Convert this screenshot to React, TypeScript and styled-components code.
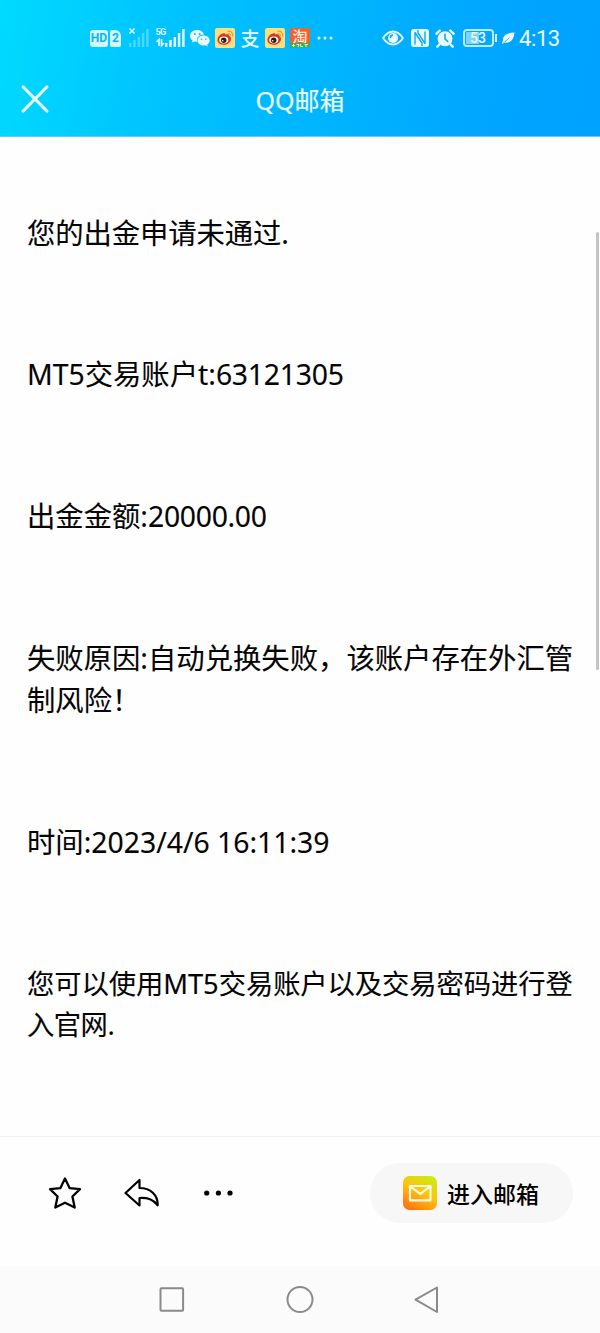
import React from "react";
import styled, { createGlobalStyle } from "styled-components";

const GlobalStyle = createGlobalStyle`
  * { box-sizing: border-box; }
  body { margin: 0; background: #fff; }
`;

const Screen = styled.div`
  width: 600px;
  height: 1333px;
  display: flex;
  flex-direction: column;
  background: #fefefe;
  color: #050505;
  font-family: "Noto Sans", "Noto Sans CJK SC", sans-serif;
  overflow: hidden;
`;

const Header = styled.header`
  height: 137px;
  flex: none;
  background: linear-gradient(100deg, #00daff 0%, #00c3ff 28%, #00b3ff 58%, #00a5ff 82%, #00a2ff 100%);
  border-bottom: 1px solid #5fccfa;
  color: #e9fbff;
`;

const StatusBar = styled.div`
  height: 62px;
  padding: 16px 0 2px 90px;
  display: flex;
  align-items: center;
`;

const StatusItem = styled.span<{ $w: number; $gap?: number }>`
  width: ${(p) => p.$w}px;
  height: 20px;
  flex: none;
  margin-left: ${(p) => p.$gap ?? 0}px;
  display: flex;
  align-items: center;
  justify-content: center;
  svg { display: block; flex: none; overflow: visible; }
`;

const Badge = styled.span<{ $w: number; $notch?: boolean }>`
  width: ${(p) => p.$w}px;
  height: 17px;
  border-radius: ${(p) => (p.$notch ? "2px 6px 2px 2px" : "3px")};
  background: #d5f6ff;
  color: #08b5f5;
  font: 700 12px/17px Roboto, sans-serif;
  text-align: center;
`;

const Network = styled.span`
  font: 700 9px/9px Roboto, sans-serif;
  letter-spacing: -0.6px;
  width: 11px;
  height: 20px;
  margin-right: -2px;
  svg { margin-top: 2px; }
`;

const Alipay = styled.span`
  height: 20px;
  font: 500 19px/19px "Noto Sans CJK SC", sans-serif;
`;

const TaoIcon = styled.span`
  width: 20px;
  height: 20px;
  border-radius: 2px;
  display: flex;
  flex-direction: column;
  background: #f0632f;
  color: #ffe9df;
`;

const TaoGlyph = styled.span`
  height: 15px;
  font: 500 15px/15px "Noto Sans CJK SC", sans-serif;
  text-align: center;
`;

const TaoCaption = styled.span`
  height: 5px;
  border-radius: 0 0 2px 2px;
  background: #3fae5b;
  display: flex;
  align-items: center;
  justify-content: center;
`;

const BatteryBody = styled.span`
  width: 31px;
  height: 18px;
  border: 2px solid #bdeaff;
  border-radius: 4px;
  background: linear-gradient(90deg, #7cd3ff 53%, transparent 53%) content-box;
  padding: 1px;
  font: 500 14px/12px Roboto, sans-serif;
  text-align: center;
`;

const BatteryTip = styled.span`
  width: 2px;
  height: 8px;
  margin-left: 1px;
  background: #d5f2ff;
`;

const Clock = styled.span`
  margin: 1px 0 0 4px;
  font: 400 22px/22px Roboto, sans-serif;
  letter-spacing: -0.4px;
  white-space: nowrap;
`;

const TitleBar = styled.div`
  height: 74px;
  display: grid;
  grid-template-columns: 70px 1fr 70px;
  align-items: center;
  svg { display: block; margin-left: 21px; }
`;

const Title = styled.h1`
  margin: 2px 0 0;
  text-align: center;
  font-size: 25px;
  line-height: 34px;
  font-weight: 400;
  -webkit-text-stroke: 0.2px currentColor;
`;

const Body = styled.main`
  height: 999px;
  flex: none;
  display: flex;
  justify-content: space-between;
`;

const Message = styled.article`
  padding: 74.500px 0 0 27px;
`;

const Paragraph = styled.p<{ $small?: boolean }>`
  margin: 0 0 99.4px;
  font-size: ${(p) => (p.$small ? 27.3 : 28.35)}px;
  line-height: ${(p) => (p.$small ? 41 : 42.4)}px;
  white-space: nowrap;
  -webkit-text-stroke: 0.1px currentColor;
`;

const Run = styled.span<{ $track: number }>`
  letter-spacing: ${(p) => p.$track}px;
`;

const ScrollThumb = styled.div`
  width: 3px;
  height: 438px;
  margin: 95px 1px 0 0;
  border-radius: 2px;
  background: #c3c3c3;
`;

const Actions = styled.footer`
  height: 130px;
  flex: none;
  border-top: 1px solid #f1f1f1;
  padding: 26px 27px 0 48px;
  display: flex;
  align-items: flex-start;
`;

const ActionGroup = styled.div`
  height: 60px;
  display: flex;
  align-items: center;
  gap: 42px;
  flex: 1;
  svg { display: block; }
`;

const MailButton = styled.button`
  width: 203px;
  height: 60px;
  border: 0;
  border-radius: 30px;
  padding: 0 0 0 33px;
  background: #f7f7f7;
  display: flex;
  align-items: center;
  gap: 10px;
  color: #000;
  white-space: nowrap;
`;

const MailLabel = styled.span`
  margin-top: -1px;
  font: 500 23px/30px "Noto Sans CJK SC", sans-serif;
`;

const NavBar = styled.nav`
  height: 67px;
  flex: none;
  background: #fbfbfb;
  display: flex;
  justify-content: center;
  align-items: center;
  gap: 99px;
  svg { display: block; }
`;

const Signal = ({ dim }: { dim?: boolean }) => (
  <svg width="20" height="18" viewBox="0 0 20 18" fill="currentColor" opacity={dim ? 0.32 : 1}>
    <rect x="0" y="14" width="2.4" height="4" />
    <rect x="4.3" y="11" width="2.4" height="7" />
    <rect x="8.6" y="8" width="2.4" height="10" />
    <rect x="12.9" y="4" width="2.4" height="14" />
    <rect x="17.2" y="0" width="2.4" height="18" />
  </svg>
);

const WeChat = () => (
  <svg width="20" height="18" viewBox="0 0 20 18" fill="currentColor">
    <path d="M7.2 1C3.2 1 0 3.6 0 6.9c0 1.9 1 3.5 2.6 4.6L2 13.6l2.5-1.2c.9.3 1.8.4 2.7.4-1.4-4 2.2-7.4 6.8-7.2C13.2 2.9 10.4 1 7.2 1Z" />
    <path d="M13.6 6.6c-3.5 0-6.1 2.3-6.1 5s2.600 5 6.100 5c.7 0 1.400-.1 2-.3l2.200 1.200-.6-1.900c1.500-.9 2.500-2.300 2.500-4 0-2.700-2.700-5-6.100-5Z" />
    <g fill="#08b9fb"><circle cx="4.8" cy="5" r="1" /><circle cx="9.6" cy="5" r="1" /><circle cx="11.5" cy="10.2" r=".8" /><circle cx="15.7" cy="10.2" r=".8" /></g>
  </svg>
);

const Weibo = () => (
  <svg width="20" height="20" viewBox="0 0 20 20">
    <rect width="20" height="20" rx="2" fill="#fbdf7d" />
    <path d="M8 5.500c1.300-.6 2.500-.4 2.300 1.100 2-.8 4.200-.6 3.700 1.300 1.400.4 2.200 1.800 2 3.300-.4 3.500-4 5.800-7.500 5.600-4-.2-6.400-2.500-6-5.500C2.700 8.700 5.100 6.200 8 5.500Z" fill="#d93324" />
    <ellipse cx="8.800" cy="12" rx="4.600" ry="3.400" fill="#fff8e8" />
    <circle cx="8.700" cy="12.200" r="2.700" fill="#252020" />
    <circle cx="7.700" cy="12.800" r=".8" fill="#fff" />
    <path d="M13 3.300c3-.5 5.300 1.800 4.700 4.900M13 5.800c1.500-.3 2.500.8 2.200 2.200" fill="none" stroke="#f19a2a" strokeWidth="1.200" strokeLinecap="round" />
  </svg>
);

const Eye = () => (
  <svg width="22" height="16" viewBox="0 0 22 16">
    <path d="M1 8Q5.500 1.500 11 1.500T21 8Q16.500 14.500 11 14.500T1 8Z" fill="none" stroke="currentColor" strokeWidth="1.800" strokeLinejoin="round" />
    <circle cx="11" cy="8" r="5" fill="currentColor" />
    <path d="M11 8V4.200A3.800 3.800 0 0 0 7.500 8Z" fill="#08a9fb" />
    <circle cx="10.800" cy="7.500" r="1.500" fill="currentColor" />
  </svg>
);

const Nfc = () => (
  <svg width="18" height="18" viewBox="0 0 18 18">
    <rect width="18" height="18" rx="3" fill="currentColor" />
    <path d="M4 15.500V3.500L11 14V17M14 2.500v12L7 4V1" fill="none" stroke="#08a9fb" strokeWidth="1.400" strokeLinejoin="round" />
  </svg>
);

const Alarm = () => (
  <svg width="20" height="19" viewBox="0 0 20 19" fill="none" stroke="currentColor" strokeLinecap="round">
    <circle cx="10" cy="9.700" r="7.500" fill="currentColor" stroke="none" />
    <path d="M1.300 4.800 4.700 1.600M18.700 4.800l-3.400-3.200M4.300 15.600l-2 2M15.700 15.600l2 2" strokeWidth="2.400" />
    <path d="M10 5.300v4.600l2.800 2.600" stroke="#08a5fb" strokeWidth="1.500" />
  </svg>
);

const Leaf = () => (
  <svg width="13" height="13" viewBox="0 0 13 13">
    <path d="M12.500.5C6 .7.800 3 1 8L0 12l3-1.200C9.500 11.500 12 6 12.500.5Z" fill="currentColor" />
    <path d="M1 11.500 7.500 5.700" stroke="#08a3fb" strokeWidth=".8" />
  </svg>
);

const MailIcon = () => (
  <svg width="34" height="34" viewBox="0 0 34 34">
    <defs>
      <linearGradient id="mail" x1=".25" y1="1" x2=".8" y2="0">
        <stop offset="0" stopColor="#ff7412" />
        <stop offset=".5" stopColor="#ffc10e" />
        <stop offset="1" stopColor="#c8ee12" />
      </linearGradient>
    </defs>
    <rect width="34" height="34" rx="6.500" fill="url(#mail)" />
    <path d="M7 10h20.500v14.300H7ZM7.300 10.300l10 7.500 10-7.500" fill="none" stroke="#fff9dc" strokeWidth="2.200" strokeLinejoin="round" />
  </svg>
);

export default function App() {
  return (
    <Screen>
      <GlobalStyle />
      <Header>
        <StatusBar>
          <StatusItem $w={18}><Badge $w={18}>HD</Badge></StatusItem>
          <StatusItem $w={11} $gap={2}><Badge $w={11} $notch>2</Badge></StatusItem>
          <StatusItem $w={20} $gap={8}>
            <svg width="20" height="20" viewBox="0 0 20 20">
              <path d="m.5 .5 5 5m0-5-5 5" stroke="currentColor" strokeWidth="1.600" />
              <g transform="translate(0 1)"><Signal dim /></g>
            </svg>
          </StatusItem>
          <StatusItem $w={30} $gap={6}>
            <Network>5G<svg width="9" height="7" viewBox="0 0 9 7" fill="none" stroke="currentColor" strokeWidth="1.600"><path d="M.5 3 3 .5V7M5.500 0v6.500L8 4" /></svg></Network>
            <Signal />
          </StatusItem>
          <StatusItem $w={20} $gap={5}><WeChat /></StatusItem>
          <StatusItem $w={20} $gap={5}><Weibo /></StatusItem>
          <StatusItem $w={20} $gap={5}><Alipay>支</Alipay></StatusItem>
          <StatusItem $w={20} $gap={5}><Weibo /></StatusItem>
          <StatusItem $w={20} $gap={5}>
            <TaoIcon>
              <TaoGlyph>淘</TaoGlyph>
              <TaoCaption>
                <svg width="16" height="3" viewBox="0 0 16 3" fill="none" stroke="#d9ffe2" strokeWidth=".9"><path d="M0 1.500h3M1.500 0v3M4.500.500h2.500l-1 2.500M8.500 0v2.500H11M12.500.500H16M14 .500V3" /></svg>
              </TaoCaption>
            </TaoIcon>
          </StatusItem>
          <StatusItem $w={16} $gap={7}>
            <svg width="16" height="4" viewBox="0 0 16 4" fill="currentColor"><circle cx="2" cy="2" r="1.500" /><circle cx="8" cy="2" r="1.500" /><circle cx="14" cy="2" r="1.500" /></svg>
          </StatusItem>
          <StatusItem $w={22} $gap={49}><Eye /></StatusItem>
          <StatusItem $w={18} $gap={7}><Nfc /></StatusItem>
          <StatusItem $w={20} $gap={6}><Alarm /></StatusItem>
          <StatusItem $w={35} $gap={7}><BatteryBody>53</BatteryBody><BatteryTip /></StatusItem>
          <StatusItem $w={13} $gap={5}><Leaf /></StatusItem>
          <Clock>4:13</Clock>
        </StatusBar>
        <TitleBar>
          <svg width="28" height="28" viewBox="0 0 28 28" fill="none" stroke="currentColor" strokeWidth="3.200" strokeLinecap="round"><path d="m2.200 2 23.600 24M25.800 2 2.200 26" /></svg>
          <Title>QQ邮箱</Title>
        </TitleBar>
      </Header>
      <Body>
        <Message>
          <Paragraph><Run $track={-0.1}>您的出金申请未通过.</Run></Paragraph>
          <Paragraph>MT5交易账户t:<Run $track={-0.25}>63121305</Run></Paragraph>
          <Paragraph>出金金额:<Run $track={-0.3}>20000.00</Run></Paragraph>
          <Paragraph>失败原因:自动兑换失败，该账户存在外汇管<br />制风险！</Paragraph>
          <Paragraph>时间:2023/4/6 16:11:39</Paragraph>
          <Paragraph $small><Run $track={-0.05}>您可以使用MT5交易账户以及交易密码进行登</Run><br /><Run $track={-0.5}>入官网.</Run></Paragraph>
        </Message>
        <ScrollThumb />
      </Body>
      <Actions>
        <ActionGroup>
          <svg width="34" height="34" viewBox="0 0 34 34" fill="none" stroke="#000" strokeWidth="2.300" strokeLinejoin="round"><path d="m17 2.500 4.600 9.600 10.400 1.100-7.600 7.300 2.300 11L17 26.700 7.300 31.500l2.300-11L2 13.200l10.400-1.100Z" /></svg>
          <svg width="36" height="30" viewBox="0 0 36 30" fill="none" stroke="#000" strokeWidth="2.200" strokeLinejoin="round"><path d="M1.500 15 15.500 2v8c11 0 18.500 7 18.200 17.300C29 21 24 19.700 15.500 20v7.500Z" /></svg>
          <svg width="32" height="6" viewBox="0 0 32 6"><circle cx="4.700" cy="3" r="2.600" /><circle cx="16.400" cy="3" r="2.600" /><circle cx="28" cy="3" r="2.600" /></svg>
        </ActionGroup>
        <MailButton><MailIcon /><MailLabel>进入邮箱</MailLabel></MailButton>
      </Actions>
      <NavBar>
        <svg width="28" height="28" viewBox="0 0 28 28" fill="none" stroke="#8a8a8a" strokeWidth="2"><rect x="1.500" y="2.200" width="22.600" height="22.600" rx="1" /></svg>
        <svg width="28" height="28" viewBox="0 0 28 28" fill="none" stroke="#8a8a8a" strokeWidth="2"><circle cx="14" cy="13.500" r="12.500" /></svg>
        <svg width="28" height="28" viewBox="0 0 28 28" fill="none" stroke="#8a8a8a" strokeWidth="2" strokeLinejoin="round"><path d="M2.500 13.700 24 1.500v24.500Z" /></svg>
      </NavBar>
    </Screen>
  );
}
